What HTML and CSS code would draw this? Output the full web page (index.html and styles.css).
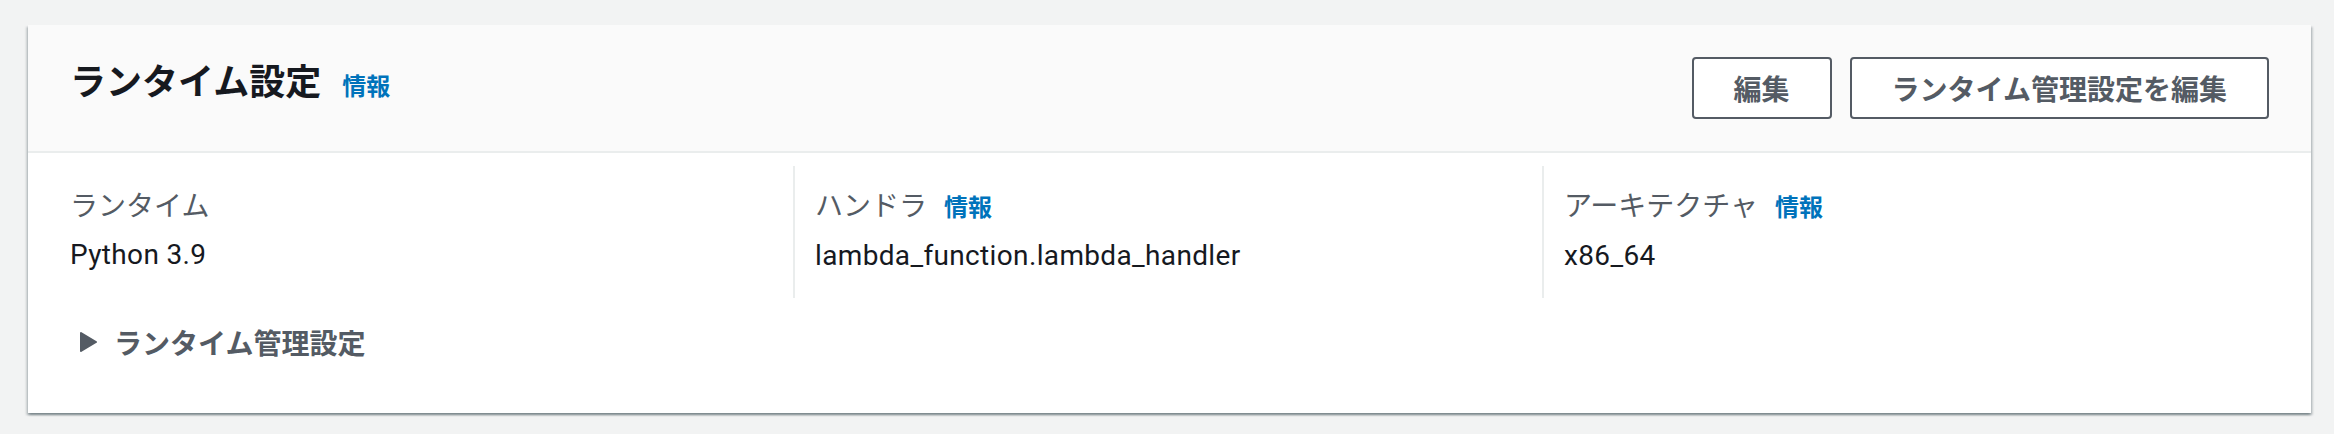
FILE: index.html
```html
<!DOCTYPE html>
<html lang="ja">
<head>
    <meta charset="UTF-8">
    <meta name="viewport" content="width=device-width, initial-scale=1.0">
    <title>ランタイム設定</title>
    <link rel="stylesheet" href="styles.css">
</head>
<body>

<div class="container">
    <div class="header">
        <h2 class="title">ランタイム設定 <a class="info" href="#">情報</a></h2>
        <div class="actions">
            <button class="btn">編集</button>
            <button class="btn">ランタイム管理設定を編集</button>
        </div>
    </div>

    <div class="content">
        <div class="columns">
            <div class="col">
                <div class="label">ランタイム</div>
                <div class="value">Python 3.9</div>
            </div>
            <div class="col">
                <div class="label">ハンドラ <a class="info" href="#">情報</a></div>
                <div class="value">lambda_function.lambda_handler</div>
            </div>
            <div class="col">
                <div class="label">アーキテクチャ <a class="info" href="#">情報</a></div>
                <div class="value">x86_64</div>
            </div>
        </div>

        <!-- collapsed expander -->
        <div class="expander">
            <svg class="caret" width="17" height="20" viewBox="0 0 17 20">
                <path d="M1 1 L16 10 L1 19 Z" fill="#545b64" stroke="#545b64" stroke-width="2" stroke-linejoin="round"/>
            </svg>
            <span>ランタイム管理設定</span>
        </div>
    </div>
</div>

</body>
</html>
```

FILE: styles.css
```css
body {
    font-family: Roboto, "Noto Sans CJK JP", sans-serif;
    margin: 0;
    padding: 25px 23px 20px 28px;
    background-color: #f2f3f3;
    color: #16191f;
}

.container {
    background-color: #fff;
    box-shadow: 0 2px 2px 0 rgba(0, 28, 36, 0.3), 2px 2px 2px 0 rgba(0, 28, 36, 0.15), -2px 2px 2px 0 rgba(0, 28, 36, 0.15);
}

.header {
    display: flex;
    justify-content: space-between;
    align-items: flex-start;
    padding: 32px 42px 32px 42px;
    background-color: #fafafa;
    border-bottom: 2px solid #eaeded;
}

.title {
    margin: 4px 0 0 0;
    font-size: 36px;
    line-height: 44px;
    font-weight: 700;
    color: #16191f;
}

.info {
    color: #0073bb;
    font-size: 24px;
    font-weight: 700;
    text-decoration: none;
    margin-left: 10px;
}

.title .info {
    margin-left: 12px;
}

.actions {
    display: flex;
    gap: 18px;
}

.btn {
    height: 62px;
    padding: 0 40px;
    background-color: #fff;
    border: 2px solid #545b64;
    border-radius: 4px;
    color: #545b64;
    font-family: inherit;
    font-size: 28px;
    font-weight: 700;
    cursor: pointer;
}

.content {
    padding: 13px 42px 49px 42px;
}

.columns {
    display: grid;
    grid-template-columns: repeat(3, 1fr);
    margin: 0 -22px 0 -26px;
}

.col {
    padding: 19px 20px 20px 20px;
    border-left: 2px solid #eaeded;
}

.col:first-child {
    border-left: none;
    padding-left: 26px;
}

.label {
    font-size: 28px;
    line-height: 44px;
    color: #545b64;
    margin-bottom: 4px;
}

.value {
    font-size: 28px;
    line-height: 44px;
    letter-spacing: 0.35px;
    color: #16191f;
}

.expander {
    display: flex;
    align-items: center;
    margin-top: 22px;
    height: 44px;
    font-size: 28px;
    font-weight: 700;
    color: #545b64;
}

.caret {
    margin: 0 17px 0 10px;
}
```
